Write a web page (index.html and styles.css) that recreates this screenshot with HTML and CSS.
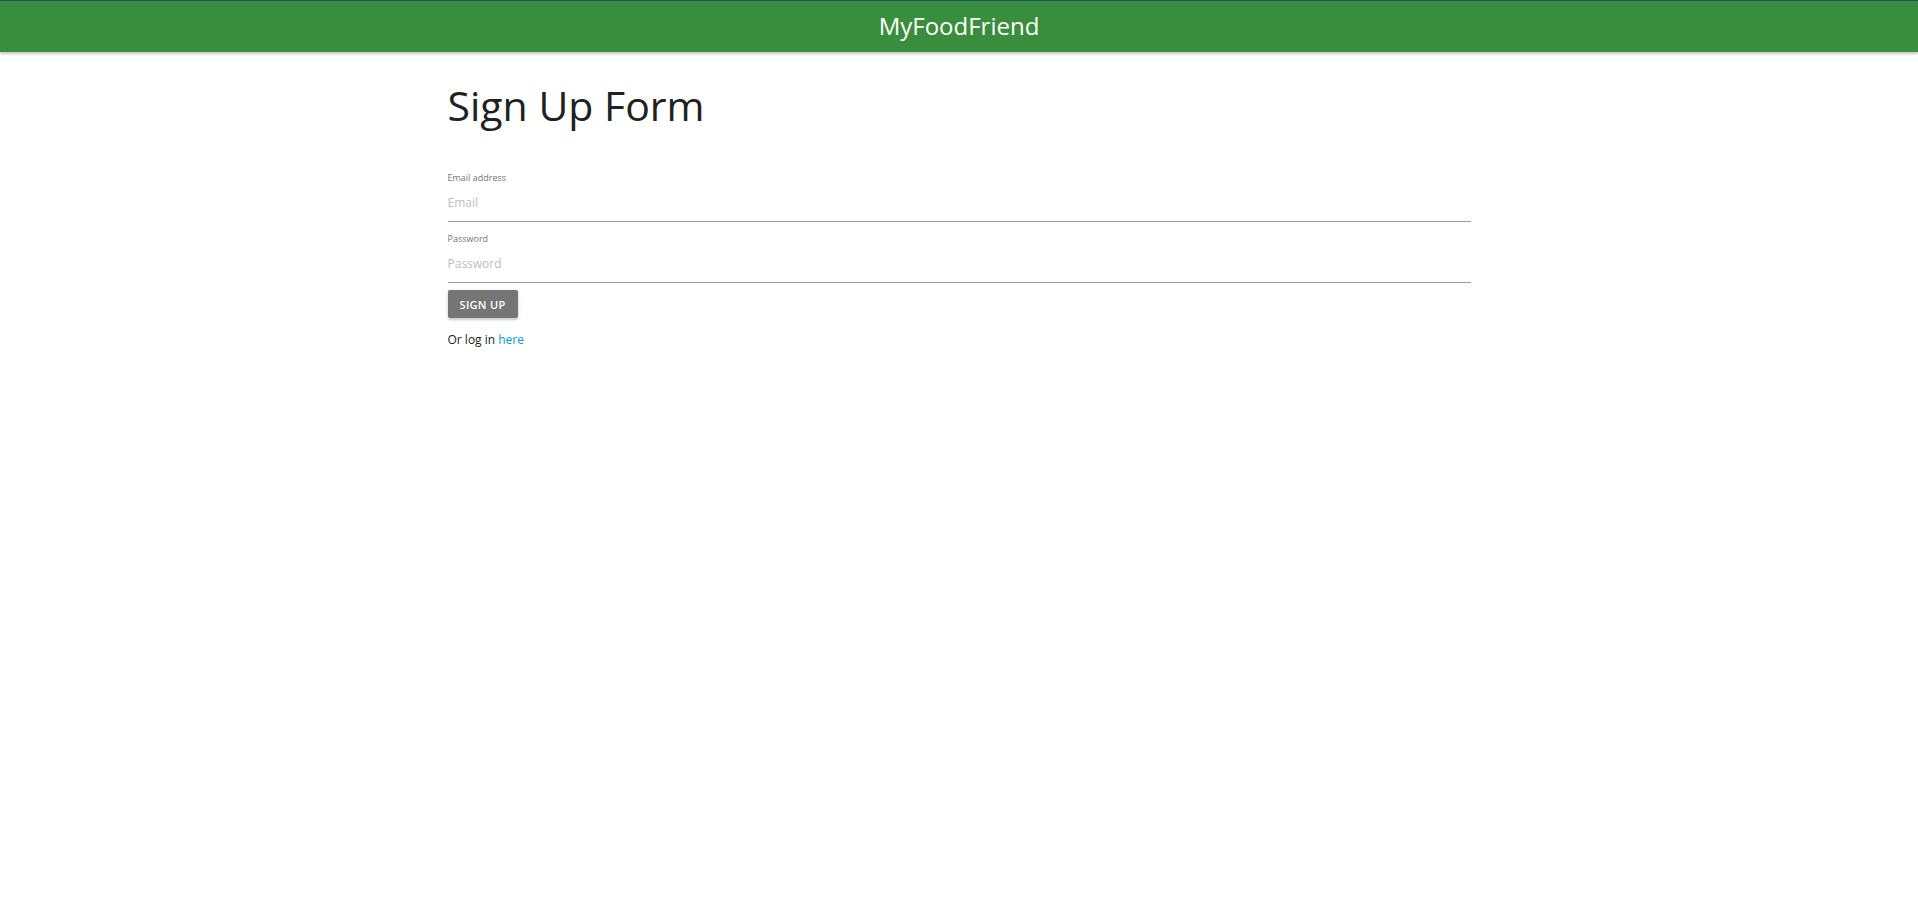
FILE: index.html
```html
<!DOCTYPE html>
<html lang="en">
<head>
<meta charset="utf-8">
<title>MyFoodFriend</title>
<link rel="stylesheet" href="styles.css">
</head>
<body>
<header class="nav">
  <div class="brand">MyFoodFriend</div>
</header>
<main class="container">
  <h1 class="title">Sign Up Form</h1>
  <form class="form">
    <div class="field">
      <label class="label" for="email">Email address</label>
      <input class="input" id="email" type="email" placeholder="Email">
    </div>
    <div class="field">
      <label class="label" for="password">Password</label>
      <input class="input" id="password" type="password" placeholder="Password">
    </div>
    <button class="btn" type="button">SIGN UP</button>
  </form>
  <p class="alt">Or log in <a class="link" href="#">here</a></p>
</main>
</body>
</html>
```
FILE: styles.css
```css
html, body {
  margin: 0;
  padding: 0;
  background: #fff;
  font-family: "Open Sans", "Noto Sans", sans-serif;
  color: #212121;
}
.nav {
  height: 51px;
  background: #388e3c;
  border-top: 1px solid #1b4f72;
  box-shadow: 0 2px 2px rgba(0,0,0,0.16), 0 1px 4px rgba(0,0,0,0.10);
  display: flex;
  align-items: center;
  justify-content: center;
}
.brand {
  color: #fff;
  font-size: 24px;
  line-height: 1;
  margin-top: -2px;
}
.container {
  width: 1023px;
  margin: 0 auto;
}
.title {
  margin: 28px 0 0 0;
  font-size: 41px;
  font-weight: 400;
  line-height: 50px;
  color: #212121;
}
.form {
  margin-top: 42px;
  display: flex;
  flex-direction: column;
}
.field {
  display: flex;
  flex-direction: column;
  margin-bottom: 11px;
}
.label {
  font-size: 9px;
  color: #757575;
  line-height: 12px;
}
.input {
  border: none;
  border-bottom: 1px solid #9e9e9e;
  outline: none;
  height: 38px;
  box-sizing: border-box;
  padding: 0;
  font-family: inherit;
  font-size: 12px;
  color: #212121;
}
.input::placeholder {
  color: #bdbdbd;
}
.btn {
  align-self: flex-start;
  width: 70px;
  height: 28px;
  margin-top: -4px;
  background: #757575;
  color: #fff;
  border: none;
  border-radius: 2px;
  font-family: inherit;
  font-size: 11px;
  font-weight: 600;
  letter-spacing: 0.3px;
  box-shadow: 0 2px 2px rgba(0,0,0,0.14), 0 1px 5px rgba(0,0,0,0.12);
  padding: 0;
}
.alt {
  margin: 13px 0 0 0;
  font-size: 12px;
  color: #212121;
}
.link {
  color: #039be5;
  text-decoration: none;
}
```
